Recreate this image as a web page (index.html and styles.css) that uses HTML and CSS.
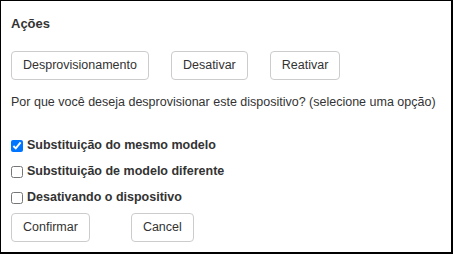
FILE: index.html
```html
<!DOCTYPE html>
<html lang="pt">
<head>
<meta charset="utf-8">
<link rel="stylesheet" href="styles.css">
</head>
<body>
<div class="panel">
  <h3 class="title">Ações</h3>
  <div class="actions">
    <button class="btn">Desprovisionamento</button>
    <button class="btn">Desativar</button>
    <button class="btn">Reativar</button>
  </div>
  <p class="question">Por que você deseja desprovisionar este dispositivo? (selecione uma opção)</p>
  <div class="options">
    <label class="opt"><input type="checkbox" checked> Substituição do mesmo modelo</label>
    <label class="opt"><input type="checkbox"> Substituição de modelo diferente</label>
    <label class="opt"><input type="checkbox"> Desativando o dispositivo</label>
  </div>
  <div class="footer">
    <button class="btn">Confirmar</button>
    <button class="btn">Cancel</button>
  </div>
</div>
</body>
</html>
```
FILE: styles.css
```css
html, body { margin: 0; padding: 0; background: #fff; }
.panel {
  box-sizing: border-box;
  width: 453px;
  height: 254px;
  border-style: solid;
  border-color: #000;
  border-width: 1px 2px 2px 1px;
  padding: 15px 10px 0 10px;
  font-family: "Liberation Sans", Arial, sans-serif;
  font-size: 12.5px;
  color: #333;
}
.title { margin: 0; font-size: 13px; font-weight: bold; line-height: 15px; }
.actions { display: flex; gap: 22px; margin-top: 20px; }
.btn {
  font-family: "Liberation Sans", Arial, sans-serif;
  font-size: 12.5px;
  color: #333;
  background: #fff;
  border: 1px solid #ccc;
  border-radius: 4px;
  padding: 6px 11px;
  line-height: 15px;
  height: 29px;
  box-sizing: border-box;
}
.question { margin: 15px 0 0 0; line-height: 15px; white-space: nowrap; }
.options { display: flex; flex-direction: column; margin-top: 28px; gap: 11px; }
.opt { display: flex; align-items: center; font-weight: bold; line-height: 15px; }
.opt input { margin: 0 4px 0 0; width: 12px; height: 12px; }
.footer { display: flex; gap: 41px; margin-top: 8px; }
```
